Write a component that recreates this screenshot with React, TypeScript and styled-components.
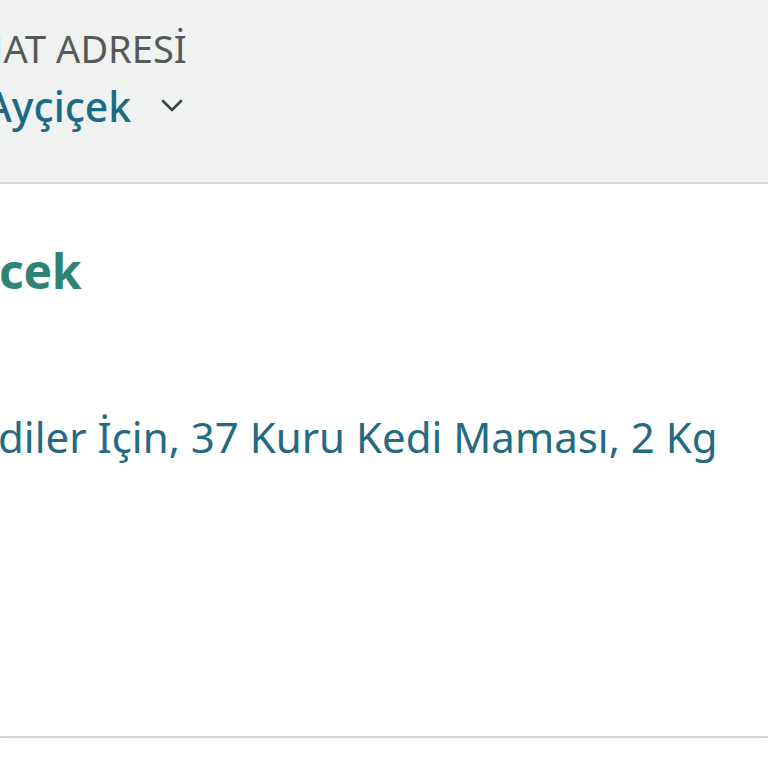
import React from "react";
import styled, { createGlobalStyle } from "styled-components";

const GlobalStyle = createGlobalStyle`
  html, body {
    margin: 0;
    padding: 0;
    background: #ffffff;
  }
  body {
    font-family: "Noto Sans", "Open Sans", Arial, sans-serif;
    overflow: hidden;
  }
`;

const Page = styled.div`
  width: 768px;
  height: 768px;
  overflow: hidden;
  display: flex;
  flex-direction: column;
  background: #ffffff;
`;

const AddressBar = styled.header`
  height: 184px;
  background: #f0f2f2;
  border-bottom: 2px solid #d5d9d9;
  box-sizing: border-box;
  display: flex;
  flex-direction: column;
  padding-top: 24px;
  overflow: hidden;
`;

const Label = styled.div<{ $shift: number }>`
  font-size: 38px;
  line-height: 48px;
  color: #565959;
  margin-left: ${(p) => p.$shift}px;
  white-space: nowrap;
`;

const NameRow = styled.button<{ $shift: number }>`
  display: flex;
  align-items: center;
  gap: 30px;
  background: none;
  border: none;
  padding: 0;
  margin: 6px 0 0 ${(p) => p.$shift}px;
  font-family: inherit;
  cursor: pointer;
`;

const Name = styled.span`
  font-size: 41px;
  line-height: 56px;
  font-weight: 500;
  color: #1b6b87;
  white-space: nowrap;
`;

const Body = styled.main`
  flex: 1;
  display: flex;
  flex-direction: column;
  padding-top: 52px;
  overflow: hidden;
`;

const Greeting = styled.h1<{ $shift: number }>`
  margin: 0 0 0 ${(p) => p.$shift}px;
  font-size: 48px;
  line-height: 70px;
  font-weight: 700;
  color: #2e8374;
  letter-spacing: -0.3px;
  white-space: nowrap;
`;

const ProductLink = styled.a<{ $shift: number }>`
  margin: 103px 0 0 ${(p) => p.$shift}px;
  font-size: 42px;
  line-height: 56px;
  color: #246a82;
  text-decoration: none;
  white-space: nowrap;
`;

const Divider = styled.hr`
  margin: 0 0 30px;
  border: none;
  height: 2px;
  background: #d5d5d5;
  box-shadow: 0 2px 3px rgba(0, 0, 0, 0.06);
`;

const Chevron = () => (
  <svg width="22" height="14" viewBox="0 0 22 14" fill="none">
    <path d="M2 2l9 9 9-9" stroke="#3d4242" strokeWidth="2.6" strokeLinecap="round" strokeLinejoin="round" />
  </svg>
);

export default function App() {
  return (
    <Page>
      <GlobalStyle />
      <AddressBar>
        <Label $shift={-31}>MAT ADRESİ</Label>
        <NameRow $shift={-15}>
          <Name>Ayçiçek</Name>
          <Chevron />
        </NameRow>
      </AddressBar>
      <Body>
        <Greeting $shift={-1}>cek</Greeting>
        <ProductLink $shift={-2} href="#">
          diler İçin, 37 Kuru Kedi Maması, 2 Kg
        </ProductLink>
      </Body>
      <Divider />
    </Page>
  );
}
